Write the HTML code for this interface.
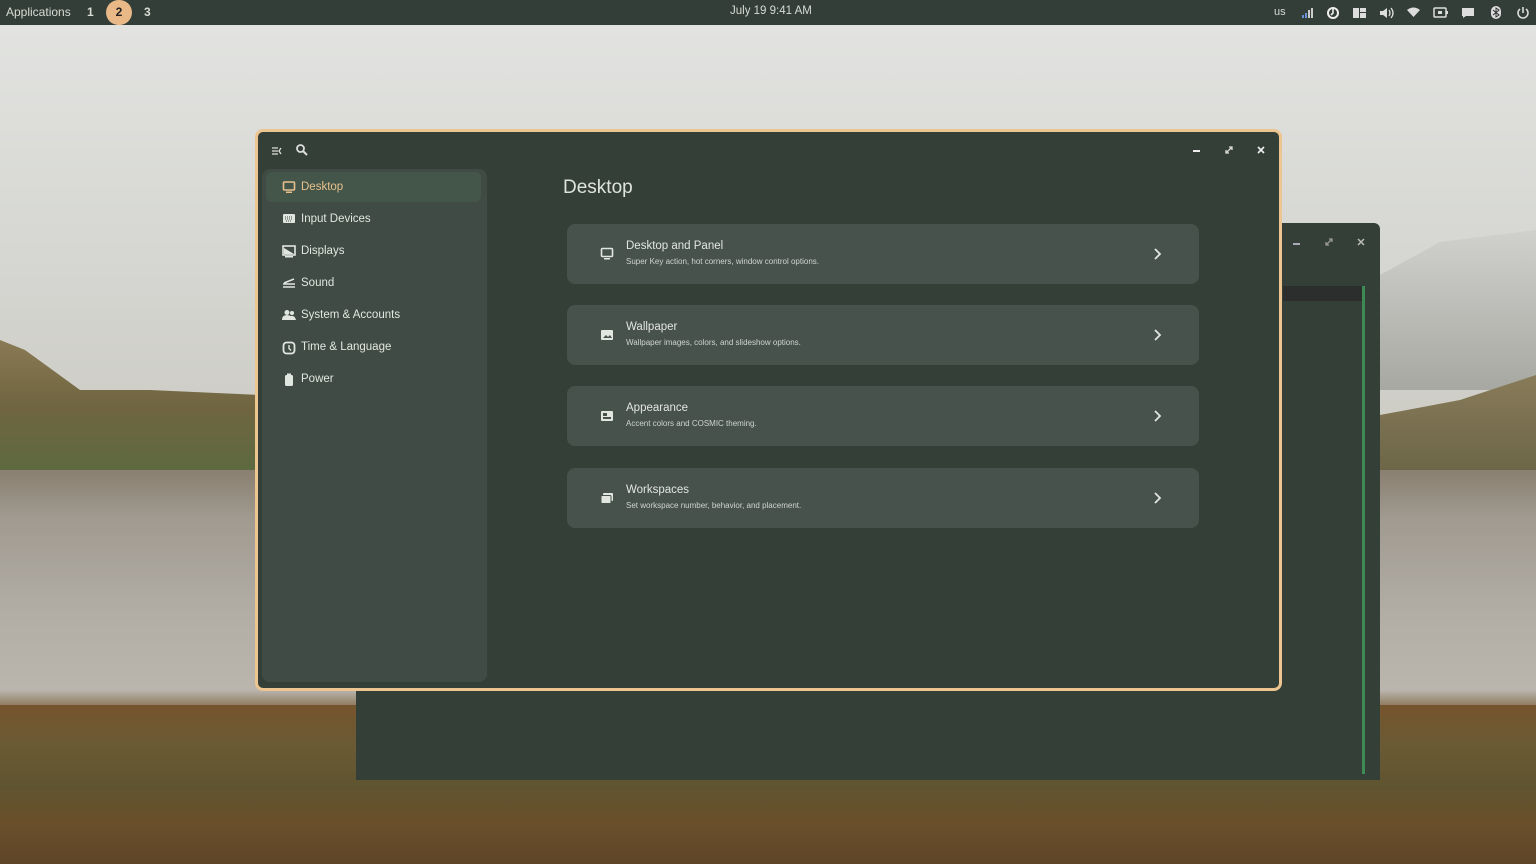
<!DOCTYPE html>
<html><head><meta charset="utf-8"><style>
*{margin:0;padding:0;box-sizing:border-box}
body{width:1536px;height:864px;overflow:hidden;position:relative;font-family:"Liberation Sans","DejaVu Sans",sans-serif;background:#cfd0cc}
.abs{position:absolute}
#sky{left:0;top:25px;width:1536px;height:450px;background:linear-gradient(#e2e3e0 0%,#d6d7d3 50%,#cbc9c1 100%)}
#lake{left:0;top:470px;width:1536px;height:240px;background:linear-gradient(#8a7f70 0%,#a09a90 20%,#b2aea6 60%,#bcb8b0 100%)}
#grass{left:0;top:705px;width:1536px;height:159px;background:linear-gradient(#74552e 0%,#6b5a34 25%,#5f5530 50%,#6a4f2b 75%,#5e4527 100%)}
#panel{left:0;top:0;width:1536px;height:25px;background:#333e38;color:#d8dbd6;font-size:12px}
.win{background:#333f37}
.side{background:#3f4b44;border-radius:8px}
.item{position:absolute;left:24px;height:28px;line-height:28px;font-size:11.5px;color:#e2e6e1}
.item svg{position:absolute;left:-4px;top:8px}
.card{position:absolute;left:567px;width:632px;height:60px;background:#47524c;border-radius:8px}
.card .t{position:absolute;left:59px;top:16px;font-size:11.5px;color:#e2e6e1}
.card .s{position:absolute;left:59px;top:33px;font-size:8px;color:#cfd4ce}
.card .ic{position:absolute;left:33px;top:23px}
.card .ch{position:absolute;left:586px;top:23px}
</style></head><body>
<div class="abs" id="sky"></div>
<div class="abs" style="left:0;top:340px;width:260px;height:135px;background:linear-gradient(#8a7a55,#6f6540 50%,#5c6a40);clip-path:polygon(0 0,25px 10px,80px 50px,150px 50px,260px 55px,260px 135px,0 135px)"></div>
<div class="abs" style="left:1380px;top:230px;width:156px;height:160px;background:linear-gradient(#d0d1cd,#a7a8a2);clip-path:polygon(0 45px,60px 12px,156px 0,156px 160px,0 160px)"></div>
<div class="abs" style="left:1380px;top:370px;width:156px;height:105px;background:linear-gradient(#8a7c5a,#6b6547);clip-path:polygon(0 45px,80px 30px,156px 5px,156px 105px,0 105px)"></div>
<div class="abs" id="lake"></div>
<div class="abs" id="grass"></div>
<div class="abs" style="left:0;top:690px;width:1536px;height:25px;background:linear-gradient(rgba(116,85,46,0),#74552e)"></div>

<div class="abs" id="panel">
 <span class="abs" style="left:6px;top:5px">Applications</span>
 <span class="abs" style="left:87px;top:5px;font-weight:bold">1</span>
 <span class="abs" style="left:106px;top:0;width:26px;height:25px;border-radius:13px;background:#e8b987;color:#222;font-weight:bold;text-align:center;line-height:25px">2</span>
 <span class="abs" style="left:144px;top:5px;font-weight:bold">3</span>
 <span class="abs" style="left:730px;top:5px;font-size:11.5px">July 19 9:41 AM</span>
 <span class="abs" style="left:1274px;top:6px;font-size:11px">us</span>
 <svg class="abs" style="left:1300px;top:6px" width="14" height="14"><rect x="2" y="9" width="2" height="3" fill="#6a8fd8"/><rect x="5" y="7" width="2" height="5" fill="#6a8fd8"/><rect x="8" y="4" width="2" height="8" fill="#ccc"/><rect x="11" y="2" width="2" height="10" fill="#ccc"/></svg>
 <svg class="abs" style="left:1326px;top:6px" width="14" height="14"><circle cx="7" cy="7" r="5" fill="none" stroke="#eee" stroke-width="2"/><path d="M7 3v4l-2 2" stroke="#eee" stroke-width="1.6" fill="none"/></svg>
 <svg class="abs" style="left:1352px;top:7px" width="15" height="12"><rect x="1" y="1" width="6" height="10" fill="#ddd"/><rect x="8" y="1" width="6" height="4" fill="#ddd"/><rect x="8" y="6" width="6" height="5" fill="#ddd"/></svg>
 <svg class="abs" style="left:1379px;top:6px" width="15" height="14"><path d="M1 5h3l4-3v10l-4-3H1z" fill="#ddd"/><path d="M10 4q2 3 0 6M12 2q4 5 0 10" stroke="#ddd" fill="none" stroke-width="1.3"/></svg>
 <svg class="abs" style="left:1406px;top:7px" width="15" height="11"><path d="M1 3q6.5-5 13 0l-6.5 7z" fill="#ddd"/></svg>
 <svg class="abs" style="left:1433px;top:7px" width="16" height="11"><rect x="1" y="1" width="12" height="9" rx="1" fill="none" stroke="#ddd" stroke-width="1.5"/><rect x="13" y="4" width="2" height="3" fill="#ddd"/><rect x="5" y="4" width="4" height="3" fill="#ddd"/></svg>
 <svg class="abs" style="left:1461px;top:7px" width="14" height="12"><path d="M1 1h12v8H5l-3 2V9H1z" fill="#ddd"/></svg>
 <svg class="abs" style="left:1490px;top:5px" width="12" height="15"><rect x="1" y="1" width="10" height="13" rx="5" fill="#ddd"/><path d="M3 5l6 5-3 2V3l3 2-6 5" stroke="#333" fill="none" stroke-width="1"/></svg>
 <svg class="abs" style="left:1516px;top:5px" width="14" height="15"><path d="M4 4a5 5 0 1 0 6 0" stroke="#ddd" fill="none" stroke-width="1.6"/><path d="M7 2v6" stroke="#ddd" stroke-width="1.6"/></svg>
</div>

<div class="abs win" style="left:356px;top:223px;width:1024px;height:557px;border-radius:6px 6px 0 0"></div>
<div class="abs" style="left:1283px;top:286px;width:80px;height:15px;background:#2b2e2c"></div>
<div class="abs" style="left:1362px;top:286px;width:3px;height:488px;background:#3e8a55"></div>
<div class="abs" style="left:1293px;top:243px;width:7px;height:1.5px;background:#aab"></div>
<svg class="abs" style="left:1324px;top:237px" width="10" height="10"><path d="M2 8L8 2M5 2h3v3M2 5v3h3" stroke="#999" fill="none" stroke-width="1.3"/></svg>
<svg class="abs" style="left:1356px;top:237px" width="10" height="10"><path d="M2 2l6 6M8 2l-6 6" stroke="#bbb" stroke-width="1.5"/></svg>

<div class="abs win" style="left:255px;top:129px;width:1027px;height:562px;border:3px solid #ecc590;border-radius:8px">
 <svg class="abs" style="left:13px;top:14px" width="12" height="10"><path d="M1 2h6M1 5h6M1 8h6M10 2l-2 3 2 3" stroke="#ddd" fill="none" stroke-width="1.3"/></svg>
 <svg class="abs" style="left:37px;top:11px" width="14" height="14"><circle cx="5.5" cy="5.5" r="3.5" fill="none" stroke="#ddd" stroke-width="1.8"/><path d="M8 8l4 4" stroke="#ddd" stroke-width="2"/></svg>
 <div class="abs" style="left:935px;top:18px;width:7px;height:1.5px;background:#eee"></div>
 <svg class="abs" style="left:966px;top:13px" width="10" height="10"><path d="M2 8L8 2M5 2h3v3M2 5v3h3" stroke="#ddd" fill="none" stroke-width="1.3"/></svg>
 <svg class="abs" style="left:998px;top:13px" width="10" height="10"><path d="M2 2l6 6M8 2l-6 6" stroke="#eee" stroke-width="1.6"/></svg>
 <div class="abs side" style="left:4px;top:37px;width:225px;height:513px">
  <div class="abs" style="left:4px;top:3px;width:215px;height:30px;background:#44564a;border-radius:6px"></div>
  <div class="item" style="top:4px;color:#e8c08c"><svg width="14" height="13"><rect x="1.5" y="1" width="11" height="8" rx="1" fill="none" stroke="#e8c08c" stroke-width="1.6"/><rect x="4" y="10.5" width="6" height="1.5" fill="#e8c08c"/></svg><span style="margin-left:15px">Desktop</span></div>
  <div class="item" style="top:36px"><svg width="14" height="12"><rect x="1" y="1" width="12" height="9" rx="1" fill="#e2e6e1"/><path d="M3 4h8M3 6h8M4 8h6" stroke="#3f4b44" stroke-width="1" stroke-dasharray="1 1"/></svg><span style="margin-left:15px">Input Devices</span></div>
  <div class="item" style="top:68px"><svg width="14" height="13"><rect x="1" y="1" width="12" height="9" fill="none" stroke="#e2e6e1" stroke-width="1.6"/><path d="M2 3l10 6H2z" fill="#e2e6e1"/><rect x="3" y="11" width="8" height="1.5" fill="#e2e6e1"/></svg><span style="margin-left:15px">Displays</span></div>
  <div class="item" style="top:100px"><svg width="14" height="12"><path d="M1 7h12M1 10h12M2 6l10-4" stroke="#e2e6e1" stroke-width="1.5"/></svg><span style="margin-left:15px">Sound</span></div>
  <div class="item" style="top:132px"><svg width="14" height="12"><circle cx="5" cy="3.5" r="2.5" fill="#e2e6e1"/><circle cx="10" cy="4" r="2" fill="#e2e6e1"/><path d="M0 11q0-5 5-5t5 5zM8 7q5-1 6 4h-4z" fill="#e2e6e1"/></svg><span style="margin-left:15px">System &amp; Accounts</span></div>
  <div class="item" style="top:164px"><svg width="14" height="14"><rect x="1.5" y="1.5" width="11" height="11" rx="3" fill="none" stroke="#e2e6e1" stroke-width="1.8"/><path d="M7 4v3.5l2 2" stroke="#e2e6e1" stroke-width="1.4" fill="none"/></svg><span style="margin-left:15px">Time &amp; Language</span></div>
  <div class="item" style="top:196px"><svg width="14" height="14"><rect x="3" y="2" width="8" height="11" rx="1.5" fill="#e2e6e1"/><rect x="5" y="0.5" width="4" height="2" fill="#e2e6e1"/></svg><span style="margin-left:15px">Power</span></div>
 </div>
 <div class="abs" style="left:305px;top:45px;font-size:19px;color:#dfe3de">Desktop</div>
</div>

<div class="card" style="top:224px"><svg class="ic" width="14" height="14"><rect x="1.5" y="1.5" width="11" height="8" rx="1" fill="none" stroke="#e2e6e1" stroke-width="1.6"/><rect x="4" y="11" width="6" height="1.5" fill="#e2e6e1"/></svg><div class="t">Desktop and Panel</div><div class="s">Super Key action, hot corners, window control options.</div><svg class="ch" width="10" height="14"><path d="M2 2l5 5-5 5" stroke="#e2e6e1" fill="none" stroke-width="1.8"/></svg></div>
<div class="card" style="top:305px"><svg class="ic" width="14" height="14"><rect x="1" y="2" width="12" height="10" rx="1" fill="#e2e6e1"/><path d="M3 10l3-3 2 2 2-2 2 3z" fill="#47524c"/></svg><div class="t">Wallpaper</div><div class="s">Wallpaper images, colors, and slideshow options.</div><svg class="ch" width="10" height="14"><path d="M2 2l5 5-5 5" stroke="#e2e6e1" fill="none" stroke-width="1.8"/></svg></div>
<div class="card" style="top:386px"><svg class="ic" width="14" height="14"><rect x="1" y="2" width="12" height="10" rx="1" fill="#e2e6e1"/><rect x="3" y="4" width="4" height="3" fill="#47524c"/><rect x="3" y="8" width="8" height="2" fill="#47524c"/></svg><div class="t">Appearance</div><div class="s">Accent colors and COSMIC theming.</div><svg class="ch" width="10" height="14"><path d="M2 2l5 5-5 5" stroke="#e2e6e1" fill="none" stroke-width="1.8"/></svg></div>
<div class="card" style="top:468px"><svg class="ic" width="14" height="14"><rect x="3" y="2" width="10" height="8" rx="1" fill="#e2e6e1"/><rect x="1" y="4.5" width="10" height="8" rx="1" fill="#e2e6e1" stroke="#47524c"/></svg><div class="t">Workspaces</div><div class="s">Set workspace number, behavior, and placement.</div><svg class="ch" width="10" height="14"><path d="M2 2l5 5-5 5" stroke="#e2e6e1" fill="none" stroke-width="1.8"/></svg></div>
</body></html>
